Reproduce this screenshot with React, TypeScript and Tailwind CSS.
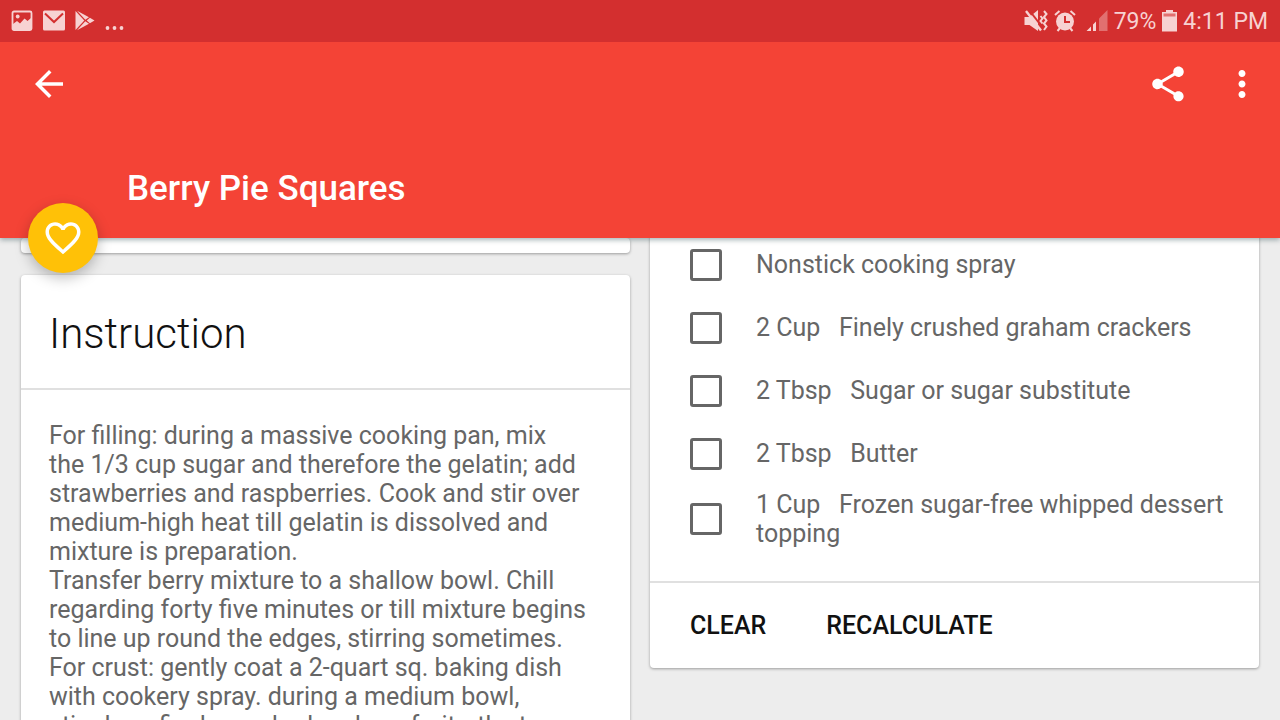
import { MdArrowBack, MdFavoriteBorder, MdMoreVert, MdShare } from "react-icons/md";

interface Ingredient {
  amount?: string;
  name: string;
}

const INGREDIENTS: Ingredient[] = [
  { name: "Nonstick cooking spray" },
  { amount: "2 Cup", name: "Finely crushed graham crackers" },
  { amount: "2 Tbsp", name: "Sugar or sugar substitute" },
  { amount: "2 Tbsp", name: "Butter" },
  { amount: "1 Cup", name: "Frozen sugar-free whipped dessert topping" },
];

const INSTRUCTIONS = `For filling: during a massive cooking pan, mix
the 1/3 cup sugar and therefore the gelatin; add
strawberries and raspberries. Cook and stir over
medium-high heat till gelatin is dissolved and
mixture is preparation.
Transfer berry mixture to a shallow bowl. Chill
regarding forty five minutes or till mixture begins
to line up round the edges, stirring sometimes.
For crust: gently coat a 2-quart sq. baking dish
with cookery spray. during a medium bowl,
stir along finely crushed graham fruity, the two`;

const CARD = "bg-white rounded-sm shadow-[0_1px_3px_rgba(0,0,0,0.35)]";

function ImageIcon() {
  return (
    <svg width="22" height="22" viewBox="0 0 22 22" aria-hidden="true">
      <rect x="1.5" y="1.5" width="19" height="18.5" rx="1.5" fill="none" stroke="currentColor" strokeWidth="1.8" />
      <circle cx="6.7" cy="6.5" r="1.9" fill="currentColor" />
      <path d="M2 14l4-3 3 2.5 4.5-5 3 2.5L20 8v12H2z" fill="currentColor" />
    </svg>
  );
}

function MailIcon() {
  return (
    <svg width="24" height="22" viewBox="0 0 24 22" aria-hidden="true">
      <rect x="1" y="0.5" width="22" height="20" rx="1.5" fill="currentColor" />
      <path d="M3 3.5l9 8.5 9-8.5" fill="none" stroke="#d32f2f" strokeWidth="2" />
    </svg>
  );
}

function PlayStoreIcon() {
  return (
    <svg width="20" height="22" viewBox="0 0 20 22" aria-hidden="true">
      <path d="M0.5 1v19l8.8-9.5z" fill="currentColor" />
      <path d="M2 0.8l12 6.4-3.7 2.6zM2 20.2l12-6.4-3.7-2.6zM14.9 7.8l4.6 2.7-4.6 2.7-3.2-2.7z" fill="currentColor" />
    </svg>
  );
}

function MuteVibrateIcon() {
  return (
    <svg width="24" height="22" viewBox="0 0 24 22" aria-hidden="true">
      <path d="M0.5 7h5L14 0v21l-8.500-6h-5z" fill="currentColor" />
      <path d="M5 0l14 18" stroke="#d32f2f" strokeWidth="2" />
      <path d="M2 1l15 19.500" stroke="currentColor" strokeWidth="2.400" />
      <path
        d="M16.500 6l2 2.500-2 2.500 2 2.500M20 1l2.500 3-2.500 3 2.500 3.500-2.500 3 2.500 3-2.500 3.500"
        fill="none"
        stroke="currentColor"
        strokeWidth="2"
      />
    </svg>
  );
}

function AlarmIcon() {
  return (
    <svg width="22" height="22" viewBox="0 0 22 22" aria-hidden="true">
      <circle cx="11" cy="11.5" r="9" fill="currentColor" />
      <path d="M1 5l4.5-4M21 5l-4.5-4M3.5 21L6 18M18.500 21L16 18" stroke="currentColor" strokeWidth="2" />
      <path d="M11 6v6h5" fill="none" stroke="#d32f2f" strokeWidth="2" />
    </svg>
  );
}

function SignalIcon() {
  return (
    <svg width="22" height="22" viewBox="0 0 22 22" aria-hidden="true">
      <path d="M0.5 21L5 16.5V21zM7 14.5l3-3V21H7z" fill="currentColor" />
      <path d="M13 8.5L21.5 0v21H13z" fill="currentColor" opacity="0.4" />
    </svg>
  );
}

function BatteryIcon() {
  return (
    <svg width="15" height="22" viewBox="0 0 15 22" aria-hidden="true">
      <path d="M4 0h7v2h4v19.5H0V2h4z" fill="currentColor" />
      <path d="M1.5 3.5h12v3h-12z" fill="#d32f2f" opacity="0.6" />
    </svg>
  );
}

function StatusBar() {
  return (
    <div className="flex h-[42px] items-center justify-between bg-[#d32f2f] pr-3 pl-[11px] text-[#f7d2d2]">
      <div className="flex items-center gap-[9px]">
        <ImageIcon />
        <MailIcon />
        <PlayStoreIcon />
        <svg width="20" height="22" viewBox="0 0 20 22" aria-hidden="true">
          <g fill="currentColor">
            <circle cx="3.5" cy="18" r="1.9" />
            <circle cx="10.5" cy="18" r="1.9" />
            <circle cx="17.5" cy="18" r="1.9" />
          </g>
        </svg>
      </div>
      <div className="flex items-center gap-[6px] text-[23px] leading-none">
        <MuteVibrateIcon />
        <AlarmIcon />
        <span className="ml-1 flex items-center gap-[6px]">
          <SignalIcon />
          79%
        </span>
        <BatteryIcon />
        <span>4:11 PM</span>
      </div>
    </div>
  );
}

function Header() {
  return (
    <header className="relative z-10 bg-[#f44336] text-white shadow-[0_2px_5px_rgba(0,40,50,0.35)]">
      <StatusBar />
      <div className="flex h-[84px] items-center justify-between pr-[17px] pl-7">
        <button type="button" aria-label="Back">
          <MdArrowBack size={42} />
        </button>
        <div className="flex items-center gap-8">
          <button type="button" aria-label="Share">
            <MdShare size={42} />
          </button>
          <button type="button" aria-label="More options">
            <MdMoreVert size={42} />
          </button>
        </div>
      </div>
      <h1 className="flex h-28 items-center pt-3 pl-[127px] text-[35px] leading-none font-medium">
        Berry Pie Squares
      </h1>
      <button
        type="button"
        aria-label="Add to favorites"
        className="absolute -bottom-[35px] left-7 flex size-[70px] items-center justify-center rounded-full bg-[#ffc107] shadow-[0_5px_14px_rgba(0,0,0,0.25)]"
      >
        <MdFavoriteBorder size={42} />
      </button>
    </header>
  );
}

function IngredientRow({ item }: { item: Ingredient }) {
  return (
    <li>
      <label className="flex min-h-[63px] items-center gap-[34px] py-[5px]">
        <input
          type="checkbox"
          className="size-8 shrink-0 appearance-none rounded-[3px] border-[3px] border-[#666] checked:bg-[#f44336]"
        />
        <span className="whitespace-pre-wrap">
          {item.amount ? `${item.amount}   ${item.name}` : item.name}
        </span>
      </label>
    </li>
  );
}

export default function App() {
  return (
    <div className="flex h-screen flex-col overflow-hidden bg-[#ededed] font-[Roboto,sans-serif] text-[#666]">
      <Header />
      <main className="grid min-h-0 flex-1 grid-cols-2 items-start gap-5 overflow-hidden px-[21px] text-[25px] leading-[29px]">
        <div className="flex flex-col gap-[22px]">
          <div className={`${CARD} h-[15px]`} />
          <section className={CARD}>
            <h2 className="border-b-2 border-[#e0e0e0] px-7 pt-[34px] pb-[30px] text-[42px] leading-[49px] font-light text-[#111]">
              Instruction
            </h2>
            <p className="px-7 py-[31px] whitespace-pre-line">{INSTRUCTIONS}</p>
          </section>
        </div>
        <section className={`${CARD} -mt-[5px]`}>
          <ul className="pr-6 pb-7 pl-10">
            {INGREDIENTS.map((item) => (
              <IngredientRow key={item.name} item={item} />
            ))}
          </ul>
          <div className="flex h-[87px] items-center gap-[60px] border-t-2 border-[#e0e0e0] px-10 font-medium text-[#111]">
            <button type="button">CLEAR</button>
            <button type="button">RECALCULATE</button>
          </div>
        </section>
      </main>
    </div>
  );
}
